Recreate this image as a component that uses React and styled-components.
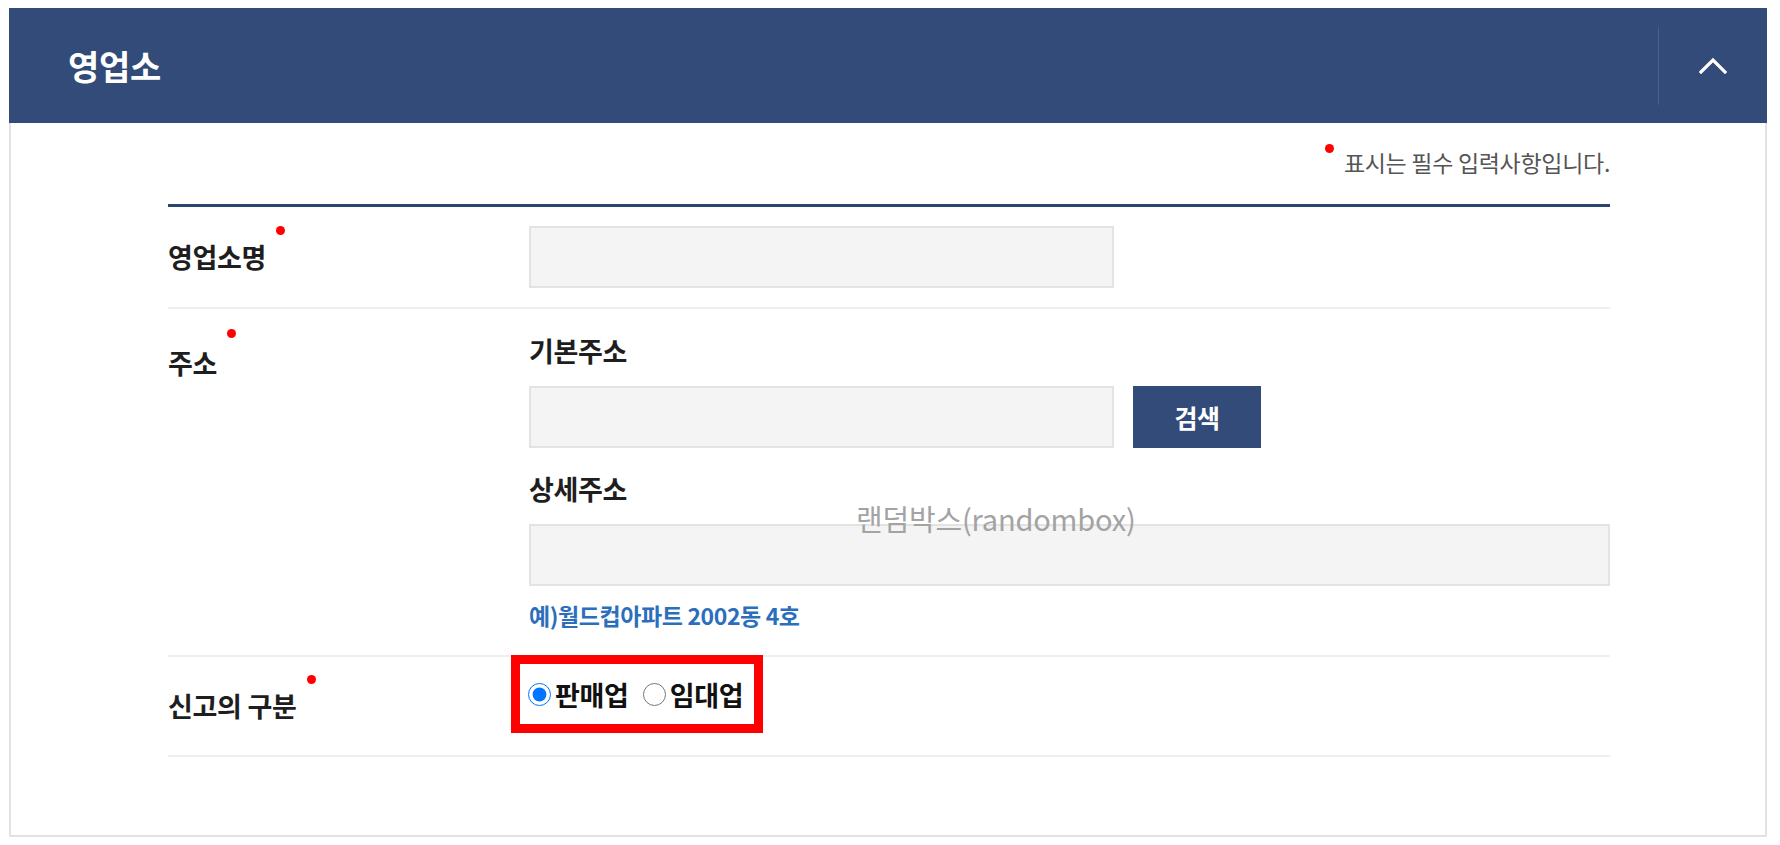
import React from 'react';
import styled, { createGlobalStyle } from 'styled-components';

const GlobalStyle = createGlobalStyle`
  html, body { margin: 0; padding: 0; background: #fff; }
  body { font-family: "Noto Sans CJK KR", "Noto Sans", sans-serif; color: #222; }
  * { box-sizing: border-box; }
`;

const Panel = styled.section`
  position: relative;
  margin: 8px 13px 8px 9px;
  height: 829px;
  display: flex;
  flex-direction: column;
`;

const Header = styled.header`
  flex: none;
  height: 115px;
  background: #334b79;
  display: flex;
  align-items: center;
  justify-content: space-between;
  padding-left: 59px;
`;

const Title = styled.h2`
  margin: 0;
  color: #fff;
  font-size: 34px;
  font-weight: 700;
  letter-spacing: -0.3px;
`;

const ToggleButton = styled.button`
  width: 109px;
  height: 78px;
  border: 0;
  border-left: 1px solid #4a5f8a;
  background: transparent;
  display: flex;
  align-items: center;
  justify-content: center;
  padding: 0;
  cursor: pointer;
`;

const Body = styled.div`
  flex: 1;
  border: 2px solid #e2e2e2;
  border-top: 0;
  padding: 0 155px 0 157px;
`;

const Notice = styled.p`
  margin: 0;
  height: 81px;
  padding-top: 24px;
  text-align: right;
  font-size: 23px;
  line-height: 30px;
  color: #555;
  letter-spacing: -0.3px;
`;

const NoticeDot = styled.span`
  display: inline-block;
  width: 9px;
  height: 9px;
  border-radius: 50%;
  background: #f00;
  margin-right: 10px;
  vertical-align: top;
  transform: translateY(-3px);
`;

const FormTable = styled.div`
  border-top: 3px solid #2b4571;
`;

const Row = styled.div`
  display: grid;
  grid-template-columns: 361px 1fr;
  align-items: ${p => p.$align || 'center'};
  min-height: ${p => p.$minHeight || 0}px;
  padding: ${p => p.$pad || '0'};
  border-bottom: 2px solid #efefef;
`;

const Label = styled.div`
  padding-top: ${p => p.$top || 0}px;
  font-size: 27px;
  font-weight: 700;
  line-height: 34px;
  color: #1e1e1e;
  letter-spacing: -0.3px;
`;

const Required = styled.span`
  position: relative;
  display: inline-block;
  &::after {
    content: '';
    position: absolute;
    left: calc(100% + 10px);
    top: ${p => p.$dotTop ?? -14}px;
    width: 9px;
    height: 9px;
    border-radius: 50%;
    background: #f00;
  }
`;

const Field = styled.div`
  display: flex;
  flex-direction: column;
`;

const SubLabel = styled.div`
  margin-top: ${p => p.$mt || 0}px;
  margin-bottom: 18px;
  font-size: 27px;
  font-weight: 700;
  line-height: 34px;
  color: #1e1e1e;
  letter-spacing: -0.3px;
`;

const TextInput = styled.input`
  width: ${p => p.$width || '100%'};
  height: 62px;
  background: #f4f4f4;
  border: 2px solid #e3e3e3;
  outline: none;
  padding: 0 16px;
  font: inherit;
  font-size: 20px;
`;

const InputLine = styled.div`
  display: flex;
  gap: 19px;
`;

const SearchButton = styled.button`
  width: 128px;
  height: 62px;
  border: 0;
  background: #334b79;
  color: #fff;
  font-family: inherit;
  font-size: 25px;
  font-weight: 700;
  letter-spacing: -0.5px;
  cursor: pointer;
`;

const Example = styled.div`
  margin-top: 15px;
  margin-bottom: 26px;
  font-size: 23px;
  font-weight: 700;
  line-height: 28px;
  color: #2b6fbc;
  letter-spacing: -0.4px;
`;

const RadioGroup = styled.div`
  display: inline-flex;
  align-items: center;
  justify-self: start;
  height: 78px;
  margin: -2px 0 0 -18px;
  padding: 0 11px 0 8px;
  border: 9px solid #f00;
  gap: 14px;
`;

const RadioItem = styled.label`
  display: inline-flex;
  align-items: center;
  gap: 4px;
  font-size: 27px;
  font-weight: 700;
  color: #111;
  letter-spacing: -0.3px;
  cursor: pointer;
`;

const Radio = styled.input`
  width: 23px;
  height: 23px;
  margin: 0;
`;

const Watermark = styled.div`
  position: absolute;
  left: 847px;
  top: 491px;
  font-size: 29px;
  line-height: 38px;
  color: #a3a3a3;
  pointer-events: none;
  letter-spacing: -0.2px;
`;

export default function App() {
  return (
    <>
      <GlobalStyle />
      <Panel>
        <Header>
          <Title>영업소</Title>
          <ToggleButton aria-label="접기">
            <svg width="28" height="17" viewBox="0 0 28 17" fill="none">
              <polyline points="2,15 14,3 26,15" stroke="#fff" strokeWidth="3.2" strokeLinecap="square" />
            </svg>
          </ToggleButton>
        </Header>
        <Body>
          <Notice>
            <NoticeDot />
            표시는 필수 입력사항입니다.
          </Notice>
          <FormTable>
            <Row $pad="19px 0">
              <Label><Required>영업소명</Required></Label>
              <TextInput $width="585px" />
            </Row>
            <Row $align="start">
              <Label $top={37}><Required $dotTop={-17}>주소</Required></Label>
              <Field>
                <SubLabel $mt={25}>기본주소</SubLabel>
                <InputLine>
                  <TextInput $width="585px" />
                  <SearchButton>검색</SearchButton>
                </InputLine>
                <SubLabel $mt={24}>상세주소</SubLabel>
                <TextInput />
                <Example>예)월드컵아파트 2002동 4호</Example>
              </Field>
            </Row>
            <Row $align="start" $minHeight={100}>
              <Label $top={32}><Required>신고의 구분</Required></Label>
              <RadioGroup>
                <RadioItem>
                  <Radio type="radio" name="kind" defaultChecked />
                  판매업
                </RadioItem>
                <RadioItem>
                  <Radio type="radio" name="kind" />
                  임대업
                </RadioItem>
              </RadioGroup>
            </Row>
          </FormTable>
        </Body>
        <Watermark>랜덤박스(randombox)</Watermark>
      </Panel>
    </>
  );
}
